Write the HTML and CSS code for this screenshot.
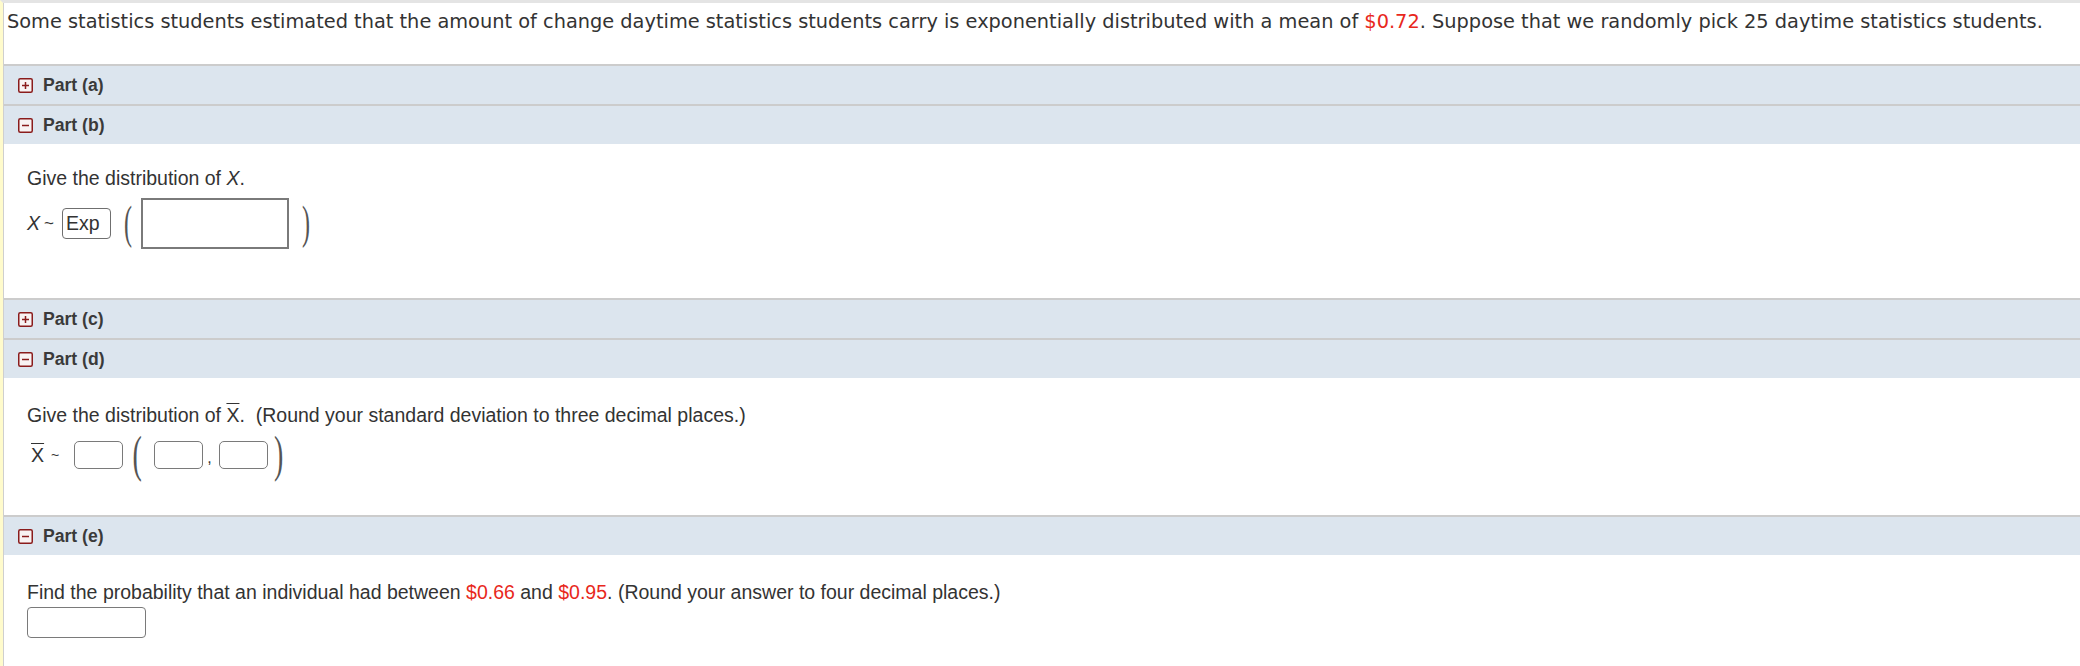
FILE: index.html
```html
<!DOCTYPE html>
<html>
<head>
<meta charset="utf-8">
<link rel="stylesheet" href="styles.css">
</head>
<body>
<div class="frame">
  <div class="inner">
    <div class="intro">Some statistics students estimated that the amount of change daytime statistics students carry is exponentially distributed with a mean of <span class="red">$0.72</span>. Suppose that we randomly pick 25 daytime statistics students.</div>

    <div class="part-head">
      <svg class="tog" width="15" height="15" viewBox="0 0 15 15"><rect x="0.75" y="0.75" width="13.5" height="13.5" rx="1.5" fill="#f8f3f3" stroke="#8a1c1c" stroke-width="1.5"/><path d="M4 7.5H11M7.5 4V11" stroke="#8a1c1c" stroke-width="1.5"/></svg>
      <span>Part (a)</span>
    </div>
    <div class="part-head">
      <svg class="tog" width="15" height="15" viewBox="0 0 15 15"><rect x="0.75" y="0.75" width="13.5" height="13.5" rx="1.5" fill="#f8f3f3" stroke="#8a1c1c" stroke-width="1.5"/><path d="M4 7.5H11" stroke="#8a1c1c" stroke-width="1.5"/></svg>
      <span>Part (b)</span>
    </div>
    <div class="part-body body-b">
      <p class="q">Give the distribution of <i>X</i>.</p>
      <div class="math math-b">
        <i class="var">X</i><span class="tilde">~</span><span class="sel">Exp</span>
        <span class="paren p-b p-open">(</span><span class="box box-wide"></span><span class="paren p-b p-close">)</span>
      </div>
    </div>

    <div class="part-head">
      <svg class="tog" width="15" height="15" viewBox="0 0 15 15"><rect x="0.75" y="0.75" width="13.5" height="13.5" rx="1.5" fill="#f8f3f3" stroke="#8a1c1c" stroke-width="1.5"/><path d="M4 7.5H11M7.5 4V11" stroke="#8a1c1c" stroke-width="1.5"/></svg>
      <span>Part (c)</span>
    </div>
    <div class="part-head">
      <svg class="tog" width="15" height="15" viewBox="0 0 15 15"><rect x="0.75" y="0.75" width="13.5" height="13.5" rx="1.5" fill="#f8f3f3" stroke="#8a1c1c" stroke-width="1.5"/><path d="M4 7.5H11" stroke="#8a1c1c" stroke-width="1.5"/></svg>
      <span>Part (d)</span>
    </div>
    <div class="part-body body-d">
      <p class="q">Give the distribution of <span class="bar">X</span>.&nbsp; (Round your standard deviation to three decimal places.)</p>
      <div class="math math-d">
        <span class="var bar">X</span><span class="tilde small">~</span><span class="box sm"></span>
        <span class="paren p-d p-open">(</span><span class="box sm"></span><span class="comma">,</span><span class="box sm"></span><span class="paren p-d p-close">)</span>
      </div>
    </div>

    <div class="part-head">
      <svg class="tog" width="15" height="15" viewBox="0 0 15 15"><rect x="0.75" y="0.75" width="13.5" height="13.5" rx="1.5" fill="#f8f3f3" stroke="#8a1c1c" stroke-width="1.5"/><path d="M4 7.5H11" stroke="#8a1c1c" stroke-width="1.5"/></svg>
      <span>Part (e)</span>
    </div>
    <div class="part-body body-e">
      <p class="q">Find the probability that an individual had between <span class="red">$0.66</span> and <span class="red">$0.95</span>. (Round your answer to four decimal places.)</p>
      <div class="answer"></div>
    </div>
  </div>
</div>
</body>
</html>
```

FILE: styles.css
```css
html, body {
  margin: 0;
  padding: 0;
  background: #ffffff;
}
.frame {
  border-left: 3px solid #fffbcc;
  border-top: 3px solid #e4e4e4;
  min-height: 663px;
}
.inner {
  border-left: 1px solid #cfcfcf;
  min-height: 663px;
}
.intro {
  font-family: "DejaVu Sans", Verdana, sans-serif;
  font-size: 19.35px;
  line-height: 22px;
  color: #333333;
  padding: 8px 0 0 3px;
  height: 53px;
  white-space: nowrap;
}
.red {
  color: #e8281c;
}
.part-head {
  display: flex;
  align-items: center;
  gap: 10px;
  height: 38px;
  border-top: 2px solid #cccccc;
  background: #dce5ee;
  padding-left: 14px;
  font-family: "Liberation Sans", Arial, sans-serif;
  font-weight: bold;
  font-size: 17.6px;
  color: #3a3a3a;
}
.tog {
  display: block;
  flex: none;
}
.part-body {
  font-family: "Liberation Sans", Arial, sans-serif;
  font-size: 19.5px;
  color: #333333;
  padding-left: 23px;
}
.q {
  margin: 0;
  line-height: 22px;
}
.body-b {
  height: 131px;
  padding-top: 23px;
}
.body-d {
  height: 111px;
  padding-top: 26px;
}
.body-e {
  height: 90px;
  padding-top: 26px;
}
.math {
  display: flex;
  align-items: center;
}
.math-b {
  margin-top: 9px;
  height: 51px;
}
.var {
  font-size: 19.6px;
}
.tilde {
  margin: 0 8px 0 4px;
  font-size: 17px;
}
.sel {
  box-sizing: border-box;
  width: 49px;
  height: 31px;
  line-height: 28px;
  border: 1.5px solid #6f6f6f;
  border-radius: 4px;
  padding-left: 3px;
}
.paren {
  display: inline-block;
  text-align: center;
  font-family: "Liberation Serif", "Times New Roman", serif;
  color: #555555;
}
.p-b {
  width: 10px;
  font-size: 24px;
  transform: scaleY(1.9);
}
.p-b.p-open {
  margin: 0 8px 0 12px;
}
.p-b.p-close {
  margin: 0 0 0 12px;
}
.box {
  display: inline-block;
  box-sizing: border-box;
  border: 2px solid #7a7a7a;
}
.box-wide {
  width: 148px;
  height: 51px;
}
.math-d {
  margin-top: 4px;
  height: 50px;
}
.bar {
  text-decoration: overline;
}
.math-d .var {
  margin-left: 4px;
}
.tilde.small {
  font-size: 14px;
  margin: 0 15px 0 7px;
}
.box.sm {
  width: 49px;
  height: 28px;
  border: 1.5px solid #7a7a7a;
  border-radius: 5px;
}
.p-d {
  width: 16px;
  font-size: 28px;
  transform: scaleY(1.8);
}
.p-d.p-open {
  margin: 0 9px 0 6px;
}
.p-d.p-close {
  margin: 0 0 0 3px;
}
.comma {
  margin: 6px 7px 0 4px;
  font-size: 16px;
}
.answer {
  margin-top: 4px;
  width: 119px;
  height: 31px;
  box-sizing: border-box;
  border: 1.5px solid #7a7a7a;
  border-radius: 4px;
}
```
